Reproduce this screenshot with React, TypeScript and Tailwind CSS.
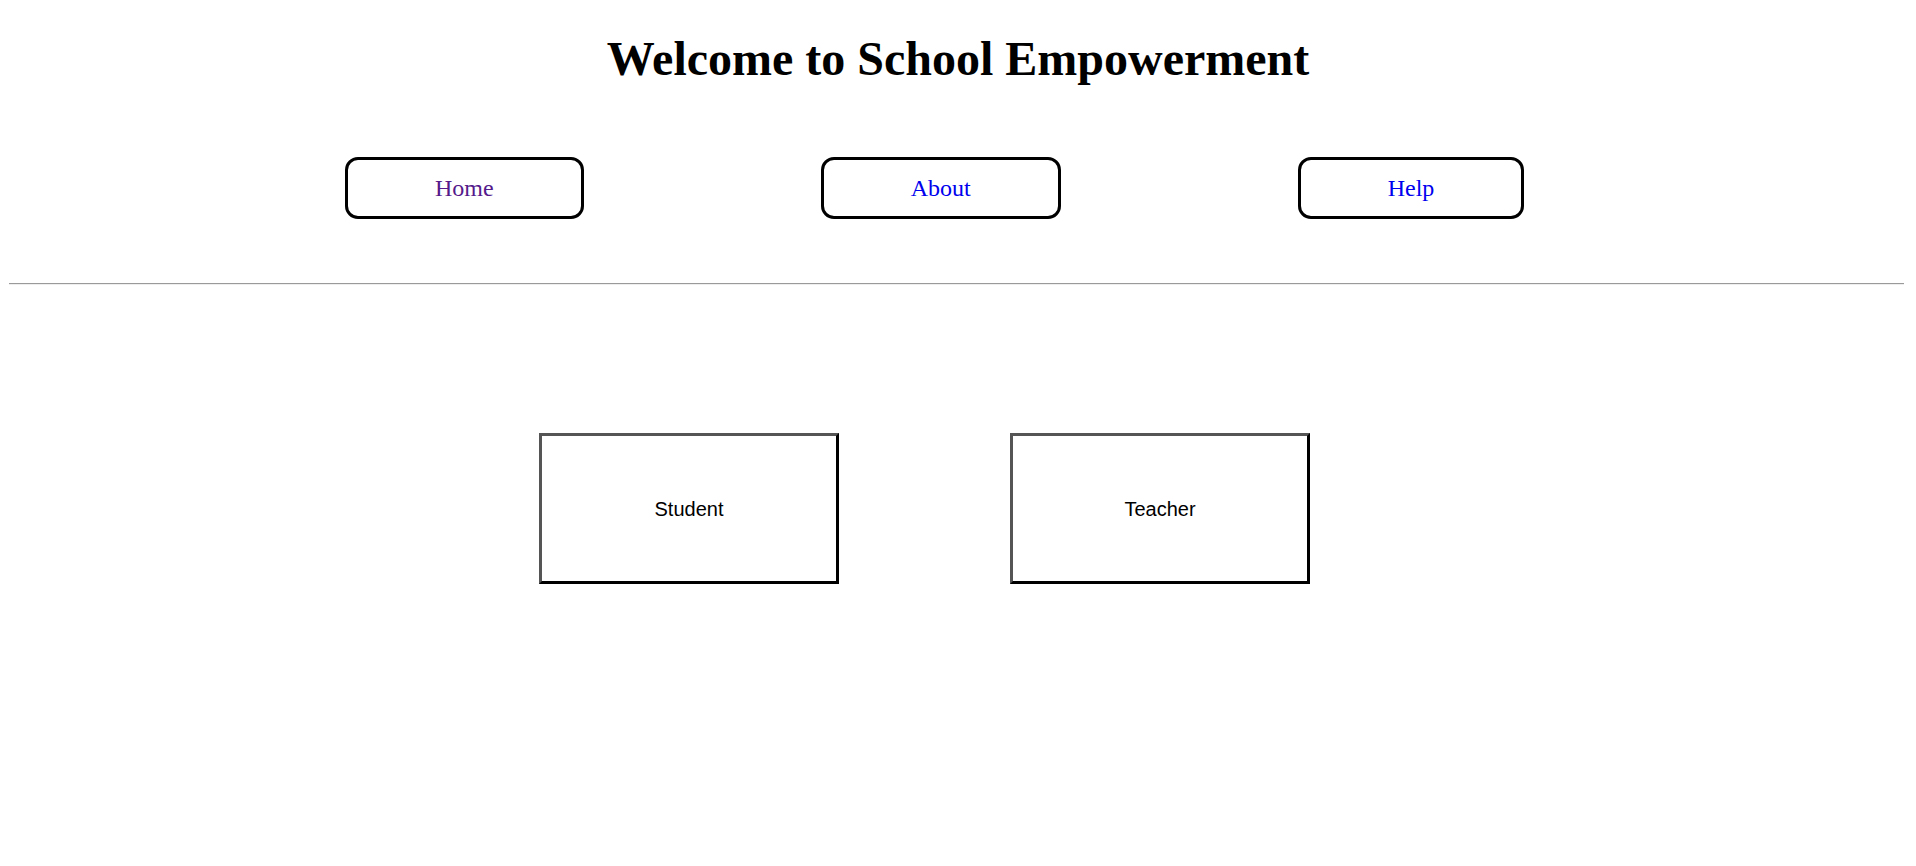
export default function App() {
  return (
    <div className="min-h-[866px] w-full bg-white px-[8px]" style={{ fontFamily: '"Liberation Serif", serif' }}>
      <h1 className="pt-[32px] text-center text-[48px] font-bold leading-[53px] text-black" style={{ fontFamily: '"Liberation Serif", serif' }}>
        Welcome to School Empowerment
      </h1>
      <nav className="mt-[72px] flex gap-[237px] pl-[337px]">
        <a className="flex h-[62px] items-center justify-center rounded-[13px] border-[3px] border-black px-[87px] text-[24px] text-[#551A8B]">Home</a>
        <a className="flex h-[62px] items-center justify-center rounded-[13px] border-[3px] border-black px-[87px] text-[24px] text-[#0000EE]">About</a>
        <a className="flex h-[62px] items-center justify-center rounded-[13px] border-[3px] border-black px-[87px] text-[24px] text-[#0000EE]">Help</a>
      </nav>
      <hr className="ml-[1px] mr-[4px] mt-[64px] border-t border-b border-t-[#9a9a9a] border-b-[#eeeeee]" />
      <div className="mt-[148px] flex gap-[171px] pl-[531px]" style={{ fontFamily: '"Liberation Sans", Arial, sans-serif' }}>
        <div className="flex h-[151px] w-[300px] items-center justify-center border-[3px] border-t-[#555] border-l-[#555] border-b-black border-r-black text-[20px] text-black">Student</div>
        <div className="flex h-[151px] w-[300px] items-center justify-center border-[3px] border-t-[#555] border-l-[#555] border-b-black border-r-black text-[20px] text-black">Teacher</div>
      </div>
    </div>
  );
}
